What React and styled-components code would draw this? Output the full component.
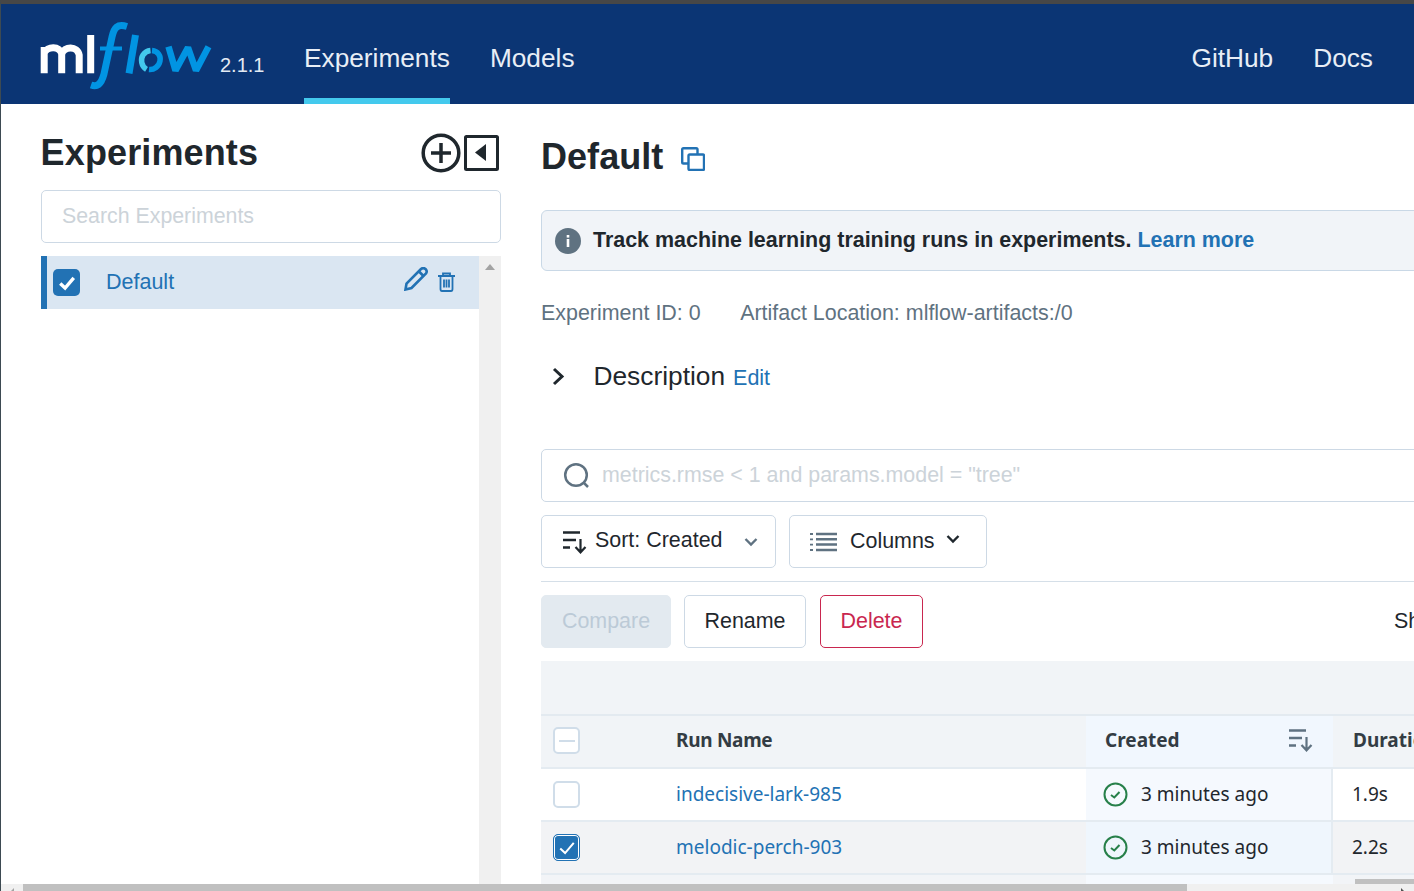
import React from "react";
import styled, { createGlobalStyle } from "styled-components";

const Global = createGlobalStyle`
  html, body { margin: 0; padding: 0; overflow: hidden; background: #fff; }
  * { box-sizing: border-box; }
`;
const Page = styled.div`
  width: 1414px; height: 891px; overflow: hidden; display: flex; flex-direction: column;
  border-top: 4px solid #474747; border-left: 1px solid #3d4a52;
  font-family: "Liberation Sans", Arial, sans-serif; color: #1f272d; background: #fff;
`;
const Header = styled.header`
  height: 100px; flex: none; background: #0b3574; display: flex; align-items: stretch; padding: 0 41px 0 39px;
`;
const Brand = styled.div`
  width: 264px; display: flex; align-items: flex-start; padding-top: 16px; gap: 4px;
`;
const Version = styled.span`
  color: #e3eaf3; font-size: 20px; line-height: 24px; margin-top: 33px;
`;
const Nav = styled.nav`
  display: flex; gap: 40px; flex: 1;
`;
const SideNav = styled(Nav)`
  flex: none;
`;
const NavItem = styled.a`
  font-size: 26.25px; color: #e8eef6; height: 100px; padding-top: 37px; line-height: 34px;
  border-bottom: 6px solid ${p => (p.$active ? "#43c9ed" : "transparent")};
`;
const Main = styled.div`
  flex: 1; min-height: 0; display: flex;
`;
const Sidebar = styled.aside`
  width: 540px; flex: none; padding-left: 40px; display: flex; flex-direction: column;
`;
const SideHead = styled.div`
  width: 460px; height: 86px; flex: none; display: flex; align-items: center; justify-content: space-between; padding: 28px 2px 16px 0;
`;
const SideTitle = styled.h1`
  font-size: 36px; line-height: 44px; font-weight: 700; margin: 0 0 0 -.4px; color: #1f272d; letter-spacing: .12px;
`;
const SideTools = styled.div`
  display: flex; align-items: center; gap: 3px;
`;
const Input = styled.div`
  height: 53px; flex: none; border: 1px solid #cdd9e5; border-radius: 5px; font-size: 21.4px; color: #ccd3d9; line-height: 51px;
  display: flex; align-items: flex-start; background: #fff;
`;
const SideSearch = styled(Input)`
  width: 460px; padding-left: 20px; margin-bottom: 13px; font-size: 21.33px;
`;
const SideList = styled.div`
  flex: 1; width: 460px; display: flex; min-height: 0;
`;
const ListBody = styled.div`
  flex: 1;
`;
const ListRow = styled.div`
  height: 53px; background: #dae6f2; border-left: 6px solid #2272b4; display: flex; align-items: center; padding: 0 24px 0 6px; color: #2272b4; font-size: 21.5px;
`;
const RowName = styled.span`
  flex: 1; margin-left: 26px;
`;
const RowIcons = styled.div`
  display: flex; align-items: flex-start; gap: 10px; margin-top: -7px;
`;
const ScrollTrack = styled.div`
  width: 22px; background: #f0f0f0; padding-top: 8px; display: flex; justify-content: center; align-items: flex-start;
`;
const ArrowUp = styled.div`
  width: 0; height: 0; border-left: 5px solid transparent; border-right: 5px solid transparent; border-bottom: 6px solid #a3a3a3;
`;
const BoxCheck = styled.span`
  width: 27px; height: 27px; background: #2272b4; border-radius: 5px; display: flex; align-items: center; justify-content: center;
`;
const Content = styled.section`
  width: 1200px; flex: none; display: flex; flex-direction: column;
`;
const TitleRow = styled.div`
  height: 106px; flex: none; display: flex; align-items: flex-start; padding-top: 30px; gap: 18px;
`;
const Title = styled.h2`
  font-size: 36px; line-height: 46px; font-weight: 700; margin: 0; color: #1f272d; letter-spacing: .05px;
`;
const CopyIcon = styled.svg`
  margin-top: 13px;
`;
const Banner = styled.div`
  height: 61px; flex: none; border: 1px solid #c9d8e6; border-radius: 6px; background: #f1f4f8; display: flex; align-items: center; padding: 0 0 0 13px; gap: 12px; font-size: 21.45px; font-weight: 700; color: #1f272d;
`;
const BannerText = styled.span`
  margin-top: -1px;
`;
const BlueText = styled.a`
  color: #2272b4;
`;
const Meta = styled.div`
  height: 84px; flex: none; display: flex; gap: 39.5px; font-size: 21.45px; color: #5f7281; padding-top: 29px; line-height: 26px;
`;
const Desc = styled.div`
  height: 94px; flex: none; display: flex; align-items: flex-start; padding-left: 11px;
`;
const DescTitle = styled.span`
  font-size: 26.3px; line-height: 42px; color: #1f272d; margin-left: 27.5px;
`;
const DescEdit = styled(BlueText)`
  font-size: 21.5px; line-height: 46px; margin-left: 8px;
`;
const ChevronIcon = styled.svg`
  margin-top: 11px;
`;
const SearchBox = styled(Input)`
  margin-bottom: 13px; padding-left: 21px; gap: 12px;
`;
const SearchGlyph = styled.svg`
  flex: none; align-self: center;
`;
const Toolbar = styled.div`
  display: flex; gap: 13px; flex: none; padding-bottom: 13px; border-bottom: 1px solid #d5dfe8; margin-bottom: 13px;
`;
const Btn = styled.button`
  font-family: inherit; font-size: 21.45px; height: 53px; border-radius: 5px; background: #fff; color: #1f272d;
  border: 1px solid #cdd9e5; padding: 0; display: flex; align-items: center; justify-content: center; flex: none;
`;
const SortBtn = styled(Btn)`
  width: 235px; justify-content: flex-start; padding: 0 17px 0 21px;
`;
const SortLabel = styled.span`
  flex: 1; text-align: left; margin-left: 8px; margin-top: -3px;
`;
const ColumnsBtn = styled(Btn)`
  width: 198px; justify-content: flex-start; padding: 0 26px 0 20px;
`;
const ColumnsLabel = styled.span`
  flex: 1; text-align: left; margin-left: 13px;
`;
const Actions = styled.div`
  height: 66px; flex: none; display: flex; gap: 13px; align-items: flex-start;
`;
const Compare = styled(Btn)`
  width: 130px; background: #e3eaf0; border-color: #e3eaf0; color: #bccad7;
`;
const Rename = styled(Btn)`
  width: 122px;
`;
const Delete = styled(Btn)`
  width: 103px; margin-left: 1px; border-color: #c9274f; color: #c9274f;
`;
const ShowMore = styled.span`
  margin-left: 458px; font-size: 21.45px; line-height: 53px; white-space: nowrap;
`;
const Table = styled.div`
  display: grid; grid-template-columns: 135px 410px 247px 408px; grid-auto-rows: min-content; font-family: "Noto Sans", sans-serif; font-size: 19px; flex: 1; min-height: 0; overflow: hidden;
`;
const Blank = styled.div`
  grid-column: 1 / -1; height: 55px; background: #f1f4f7; border-bottom: 2px solid #e3eaf0;
`;
const Cell = styled.div`
  display: flex; align-items: center; height: 53px; padding: 0 0 2px ${p => p.$pad ?? 19}px;
  border-bottom: 2px solid #e4ebf1;
  background: ${p => p.$bg || "#fff"};
`;
const BoxCell = styled(Cell)`
  padding-left: 20px;
`;
const HeadCell = styled(Cell)`
  font-weight: 700; color: #333c44; justify-content: space-between; padding: 0 20px 3px ${p => p.$pad ?? 19}px;
`;
const RunHead = styled.span`
  letter-spacing: -.3px;
`;
const RunLink = styled.a`
  color: #2272b4;
`;
const CreatedText = styled.span`
  margin-left: 13px; color: #1f272d;
`;
const CreatedCell = styled(Cell)`
  border-right: 2px solid #e4ebf1; padding-left: 17px;
`;
const StatusGlyph = styled.svg`
  flex: none; margin-top: 2px;
`;
const TableBox = styled.span`
  width: 27px; height: 27px; border: 2px solid #d0dde9; border-radius: 5px; background: #fff; display: flex; align-items: center; justify-content: center; margin: 2px 0 0 -8px;
`;
const HeadBox = styled(TableBox)`
  margin-top: 0;
`;
const TableBoxOn = styled(TableBox)`
  background: #2272b4; border: 1px solid #2272b4; box-shadow: inset 0 0 0 1px #fff;
`;
const MiniThumb = styled.div`
  position: absolute; right: 0; bottom: 7px; width: 59px; height: 5px; background: #c0c0c0;
`;
const PageBar = styled.div`
  height: 7px; flex: none; background: #f0f0f0; display: flex; overflow: hidden;
`;
const BarCap = styled.div`
  width: 22px; flex: none; padding: 4px 0 0 9px;
`;
const BarEnd = styled.div`
  flex: 1; display: flex; justify-content: flex-end; padding: 4px 9px 0 0;
`;
const BarArrow = styled.div`
  width: 0; height: 0; border-top: 4px solid transparent; border-bottom: 4px solid transparent;
  ${p => (p.$right ? "border-left: 4px solid #505050;" : "border-right: 4px solid #a3a3a3;")}
`;
const PageThumb = styled.div`
  width: 1164px; height: 7px; flex: none; background: #c0c0c0;
`;

const Logo = () => (
  <svg width="176" height="70" viewBox="0 0 176 70" fill="none" style={{ flex: "none" }}>
    <g stroke="#fff" strokeWidth="7">
      <path d="M4.200 53.300V27M4.200 33C7 26 20 25.500 21.700 34V53.300M21.700 34C24 26 37.500 25.500 39.200 35V53.300" />
      <path d="M50.700 15V53.300" />
    </g>
    <g stroke="#0194e2" fill="none">
      <path strokeWidth="7" d="M87 6.500C77 3.500 74 8 72 17L64 54C61 65 57 67 51 65" />
      <path strokeWidth="4" d="M60 28.500H82" />
      <path strokeWidth="7" d="M95.500 15L89 53.300" />
      <path strokeWidth="6.500" strokeMiterlimit="2" d="M128.500 26.700L135.500 50.500L148 27.500L156 50.500L168.500 26.700" />
      <path strokeWidth="5.500" d="M112 30.500C118 31 121 36 120 41C119 46.500 114 50 109 49.500" />
    </g>
    <path stroke="#43c9ed" strokeWidth="5.500" d="M106.500 49.300C101 46 100.500 39 103 35C105 32 107.500 30.800 110.500 30.500" />
  </svg>
);

const Check = ({ size = 16, w = 3 }) => (
  <svg width={size} height={size} viewBox="0 0 16 16" fill="none"><path d="M2 8.500L6.300 12.500L14 3.500" stroke="#fff" strokeWidth={w} /></svg>
);
const SortIcon = ({ color = "#1f272d" }) => (
  <svg width="24" height="24" viewBox="0 0 24 24" fill="none" stroke={color} style={{ flex: "none" }}>
    <path d="M0 2.500H17M0 10H13M0 17.500H7" strokeWidth="2.500" />
    <path d="M17.500 9V22M12.500 17L17.500 22.300L22.500 17" strokeWidth="2.200" />
  </svg>
);
const StatusIcon = () => (
  <StatusGlyph width="25" height="25" viewBox="0 0 25 25" fill="none" stroke="#27804a">
    <circle cx="12.500" cy="12.500" r="11" strokeWidth="2" />
    <path d="M8 13L11.300 15.500L16.500 10" strokeWidth="2" />
  </StatusGlyph>
);

const Row = ({ name, selected, bg, created }) => (
  <>
    <BoxCell $bg={bg}>{selected ? <TableBoxOn><Check size={18} w={1.8} /></TableBoxOn> : <TableBox />}</BoxCell>
    <Cell $bg={bg} $pad={0}><RunLink>{name}</RunLink></Cell>
    <CreatedCell $bg={created}><StatusIcon /><CreatedText>3 minutes ago</CreatedText></CreatedCell>
    <Cell $bg={bg}>{selected ? "2.2s" : "1.9s"}</Cell>
  </>
);

export default function App() {
  return (
    <Page>
      <Global />
      <Header>
        <Brand><Logo /><Version>2.1.1</Version></Brand>
        <Nav>
          <NavItem $active>Experiments</NavItem>
          <NavItem>Models</NavItem>
        </Nav>
        <SideNav as="div">
          <NavItem>GitHub</NavItem>
          <NavItem>Docs</NavItem>
        </SideNav>
      </Header>
      <Main>
        <Sidebar>
          <SideHead>
            <SideTitle>Experiments</SideTitle>
            <SideTools>
              <svg width="40" height="40" viewBox="0 0 40 40" fill="none" stroke="#1f272d" strokeWidth="3.500">
                <circle cx="20" cy="20" r="17.800" />
                <path d="M20 10V30M10 20H30" />
              </svg>
              <svg width="35" height="36" viewBox="0 0 35 36" fill="none">
                <rect x="1.500" y="1.500" width="32" height="33" stroke="#1f272d" strokeWidth="3" rx="1" />
                <path d="M22 9V26L11 17.500Z" fill="#1f272d" />
              </svg>
            </SideTools>
          </SideHead>
          <SideSearch>Search Experiments</SideSearch>
          <SideList>
            <ListBody>
              <ListRow>
                <BoxCheck><Check size={18} w={3} /></BoxCheck>
                <RowName>Default</RowName>
                <RowIcons>
                  <svg width="24" height="24" viewBox="0 0 24 24" fill="none" stroke="#2272b4" strokeWidth="2.600">
                    <path d="M1.500 22.500L2.500 16.500L17 2C18.500 .7 20 .7 21.500 2C23 3.500 23 5 22 6.500L7.500 21Z" />
                    <path d="M15 4.500L19.500 9" />
                  </svg>
                  <svg width="17" height="20" viewBox="0 0 17 20" fill="none" stroke="#2272b4" strokeWidth="1.800" style={{ marginTop: 5 }}>
                    <path d="M0 4H17M5 4V1.500H12V4M2.500 4V17C2.500 18.500 3 19 4 19H13C14 19 14.500 18.500 14.500 17V4" />
                    <path d="M6 7.500V15.500M8.500 7.500V15.500M11 7.500V15.500" />
                  </svg>
                </RowIcons>
              </ListRow>
            </ListBody>
            <ScrollTrack><ArrowUp /></ScrollTrack>
          </SideList>
        </Sidebar>
        <Content>
          <TitleRow>
            <Title>Default</Title>
            <CopyIcon width="24" height="24" viewBox="0 0 24 24" fill="none" stroke="#2272b4" strokeWidth="2.400">
              <path d="M7 16.500H2.500C1.700 16.500 1.200 16 1.200 15.200V2.500C1.200 1.700 1.700 1.200 2.500 1.200H15.200C16 1.200 16.500 1.700 16.500 2.500V7" />
              <rect x="7.500" y="7.500" width="15.500" height="15.500" rx="1.300" />
            </CopyIcon>
          </TitleRow>
          <Banner>
            <svg width="26" height="26" viewBox="0 0 26 26" style={{ flex: "none" }}>
              <circle cx="13" cy="13" r="13" fill="#5f7281" />
              <rect x="11.700" y="11" width="2.600" height="8" fill="#fff" />
              <rect x="11.700" y="7" width="2.600" height="2.600" fill="#fff" />
            </svg>
            <BannerText>Track machine learning training runs in experiments. <BlueText>Learn more</BlueText></BannerText>
          </Banner>
          <Meta>
            <span>Experiment ID: 0</span>
            <span>Artifact Location: mlflow-artifacts:/0</span>
          </Meta>
          <Desc>
            <ChevronIcon width="14" height="20" viewBox="0 0 14 20" fill="none" stroke="#1f272d" strokeWidth="3">
              <path d="M2 3L10 10.500L2 18" />
            </ChevronIcon>
            <DescTitle>Description</DescTitle>
            <DescEdit>Edit</DescEdit>
          </Desc>
          <SearchBox>
            <SearchGlyph width="27" height="27" viewBox="0 0 27 27" fill="none" stroke="#5f7281" strokeWidth="2.500">
              <circle cx="13" cy="13" r="10.800" />
              <path d="M20.500 20.500L25 25" />
            </SearchGlyph>
            metrics.rmse &lt; 1 and params.model = "tree"
          </SearchBox>
          <Toolbar>
            <SortBtn>
              <SortIcon />
              <SortLabel>Sort: Created</SortLabel>
              <svg width="14" height="10" viewBox="0 0 14 10" fill="none" stroke="#5f7281" strokeWidth="2.400"><path d="M1.500 2L7 7.500L12.500 2" /></svg>
            </SortBtn>
            <ColumnsBtn>
              <svg width="27" height="20" viewBox="0 0 27 20" fill="none" stroke="#5f7281" strokeWidth="2.500">
                <path d="M6 2H27M6 7.300H27M6 12.600H27M6 18H27" />
                <path d="M0 2H3M0 7.300H3M0 12.600H3M0 18H3" strokeWidth="1.800" />
              </svg>
              <ColumnsLabel>Columns</ColumnsLabel>
              <svg width="14" height="10" viewBox="0 0 14 10" fill="none" stroke="#1f272d" strokeWidth="2.400" style={{ marginTop: -6 }}><path d="M1.500 2L7 7.500L12.500 2" /></svg>
            </ColumnsBtn>
          </Toolbar>
          <Actions>
            <Compare>Compare</Compare>
            <Rename>Rename</Rename>
            <Delete>Delete</Delete>
            <ShowMore>Show</ShowMore>
          </Actions>
          <Table>
            <Blank />
            <BoxCell $bg="#f1f4f7"><HeadBox><svg width="16" height="2"><rect width="16" height="2" fill="#d0dde9" /></svg></HeadBox></BoxCell>
            <HeadCell $bg="#f1f4f7" $pad={0}><RunHead>Run Name</RunHead></HeadCell>
            <HeadCell $bg="#f1f7fe">Created<SortIcon color="#5f7281" /></HeadCell>
            <HeadCell $bg="#f1f4f7" $pad={20}>Duration</HeadCell>
            <Row name="indecisive-lark-985" bg="#fff" created="#f5f9fe" />
            <Row name="melodic-perch-903" bg="#f2f3f5" created="#eff6fd" selected />
            <Cell $bg="#f2f4f7" /><Cell $bg="#f2f4f7" /><Cell $bg="#f5f9fe" /><Cell $bg="#f2f4f7" />
          </Table>
          <MiniThumb />
        </Content>
      </Main>
      <PageBar>
        <BarCap><BarArrow /></BarCap>
        <PageThumb />
        <BarEnd><BarArrow $right /></BarEnd>
      </PageBar>
    </Page>
  );
}
